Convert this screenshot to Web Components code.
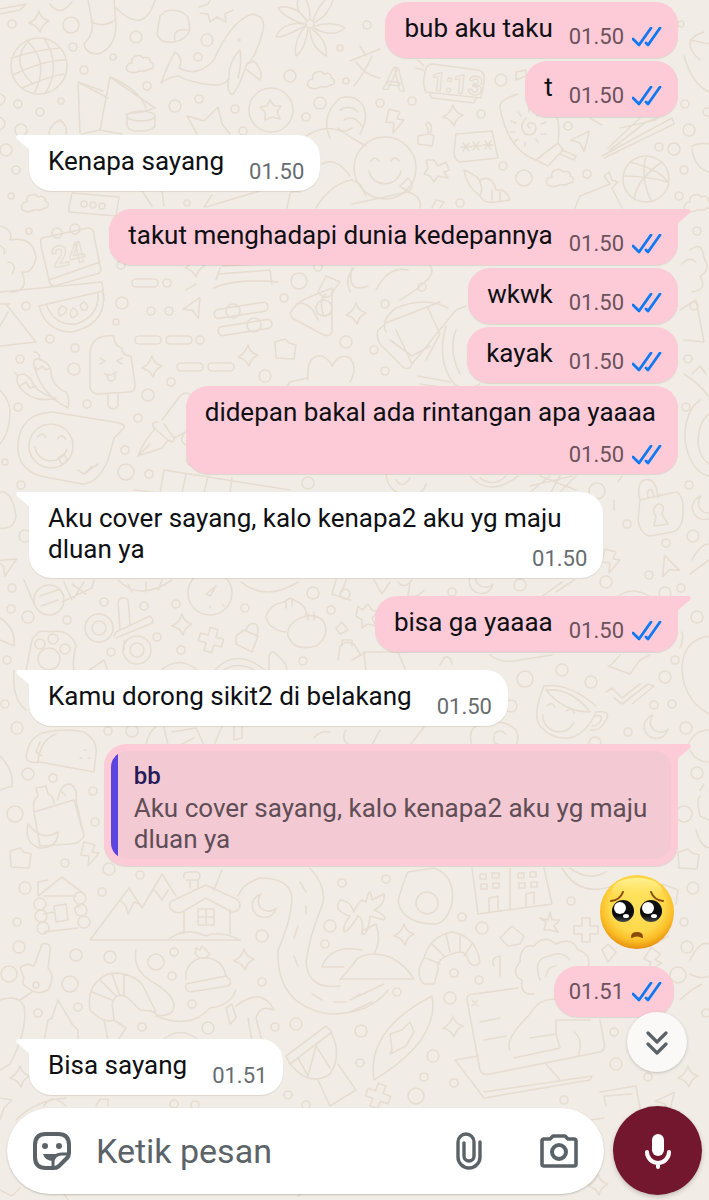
<!DOCTYPE html>
<html lang="id">
<head>
<meta charset="utf-8">
<meta name="viewport" content="width=device-width, initial-scale=1">
<title>Chat</title>
<style>
  body {
    margin: 0;
    font-family: Roboto, "Noto Sans", sans-serif;
    --bg-chat: #f1ede6;
    --bg-out: #fdcbd8;
    --bg-in: #fff;
    --doodle: #e6ddd2;
    --text: #0e1013;
    --text-meta-out: #6b525b;
    --text-meta-in: #676c70;
    --icon: #5b6368;
    --read: #0f79f2;
  }
</style>
</head>
<body>
<chat-screen>
  <chat-message side="out" time="01.50">bub aku taku</chat-message>
  <chat-message side="out" time="01.50">t</chat-message>
  <chat-message side="in" time="01.50" tail>Kenapa sayang</chat-message>
  <chat-message side="out" time="01.50" tail>takut menghadapi dunia kedepannya</chat-message>
  <chat-message side="out" time="01.50">wkwk</chat-message>
  <chat-message side="out" time="01.50">kayak</chat-message>
  <chat-message side="out" time="01.50" layout="stack">didepan bakal ada rintangan apa yaaaa</chat-message>
  <chat-message side="in" time="01.50" layout="overlay" tail>Aku cover sayang, kalo kenapa2 aku yg maju<br>dluan ya</chat-message>
  <chat-message side="out" time="01.50" tail>bisa ga yaaaa</chat-message>
  <chat-message side="in" time="01.50" tail>Kamu dorong sikit2 di belakang</chat-message>
  <chat-message side="out" layout="quote" tail>
    <chat-quote author="bb">Aku cover sayang, kalo kenapa2 aku yg maju dluan ya</chat-quote>
  </chat-message>
  <chat-emoji time="01.51"></chat-emoji>
  <chat-message side="in" time="01.51" tail>Bisa sayang</chat-message>
  <chat-composer slot="footer"></chat-composer>
</chat-screen>

<script>
class ChatWallpaper extends HTMLElement {
  constructor() {
    super();
    const shadow = this.attachShadow({ mode: 'open' });
    // x, y, radius
    const dots = [
      [12,24,4],[71,25,8],[136,37,6],[73,47,4],[113,57,3],[84,70,4],[147,86,4],[61,101,3],[175,106,6],[199,99,4],[207,40,6],[198,57,4],[290,76,6],[235,109,4],[320,103,6],[306,117,4],[340,48,3],[346,81,3],[18,104,4],[40,112,4],[21,130,6],[6,150,6],[243,131,4],[16,170,4],[11,196,3],[187,203,3],[29,231,3],[121,265,4],[167,283,4],[299,281,8],[318,267,4],
      [367,25,4],[380,103,4],[412,101,4],[481,114,4],[501,80,6],[503,166,4],[524,178,8],[568,126,4],[587,174,4],[659,147,4],[674,149,6],[689,130,6],[685,104,4],[681,24,3],[684,170,4],[679,196,4],[697,231,4],[460,203,4],[422,287,4],[707,112,4],
      [26,306,4],[122,303,6],[116,322,3],[50,339,4],[75,348,4],[74,369,6],[20,359,4],[151,311,4],[169,311,4],[200,340,4],[171,382,4],[148,395,6],[87,404,4],[18,407,4],[138,418,4],[125,450,4],[126,472,8],[149,474,4],[5,462,3],[21,485,4],[265,376,6],[346,342,6],[308,483,6],[25,536,6],[284,298,4],
      [385,304,4],[374,350,4],[385,371,4],[694,306,4],[688,359,4],[686,407,4],[689,485,4],[597,491,8],[627,524,4],[693,536,6],[666,543,4],[649,575,4],[606,582,6],
      [12,588,4],[11,609,4],[28,617,6],[104,602,4],[67,620,4],[144,606,4],[176,604,4],[157,637,4],[111,652,4],[7,660,4],[181,650,4],[245,608,4],[313,593,6],[331,610,4],[303,661,4],[5,704,4],[17,728,6],[28,774,6],[53,778,4],[93,791,4],[15,814,8],[95,822,4],[65,863,4],[109,869,6],[140,875,4],[108,731,4],[132,731,6],
      [452,592,4],[520,585,6],[681,588,4],[665,593,6],[697,617,6],[675,660,4],[562,670,6],[525,679,8],[591,682,6],[665,677,6],[511,706,6],[654,705,4],[672,704,4],[628,732,4],[686,728,6],[595,743,6],[697,773,6],[684,814,8],
      [25,888,6],[102,892,4],[17,922,4],[19,947,6],[76,955,6],[110,957,6],[156,962,8],[174,952,4],[172,976,4],[9,974,8],[70,984,8],[78,1007,4],[38,1013,4],[262,936,6],[262,982,4],[342,883,4],[330,926,6],[325,944,4],[192,1004,4],[142,1027,4],[208,1028,6],[275,1027,4],[296,1024,6],[288,1095,4],[174,1104,4],[195,1105,4],[306,1105,4],
      [386,879,4],[462,917,4],[482,928,6],[571,901,4],[693,888,6],[684,922,4],[687,947,6],[454,973,4],[479,980,4],[450,998,6],[397,992,4],[361,1031,6],[433,1056,6],[360,1063,4],[424,1077,4],[454,1083,4],[416,1096,8],[614,1032,4],[616,1064,6],[648,1077,4],[564,1100,4],[678,975,8],[706,1013,4]
    ];
    const sparkles = [[39,22],[152,367],[248,356],[195,267],[453,116],[356,314],[182,625],[404,935],[453,1027],[688,1077],[244,960],[20,1077],[598,1185]];
    const clouds = [[140,64],[321,80],[35,203],[560,178],[698,203]];
    const arrows = [[195,306,30],[583,139,40],[668,565,-20],[668,1100,40],[8,564,60]];
    const crosses = [[211,640,15],[586,930,0],[378,1096,20]];
    const use = (id, list) => list.map(([x, y, r = 0]) =>
      `<use href="#${id}" transform="translate(${x} ${y}) rotate(${r})"/>`).join('');
    shadow.innerHTML = `
      <style>
        :host {
          position: absolute;
          inset: 0;
          overflow: hidden;
          background: var(--bg-chat);
        }
        svg {
          display: block;
          width: 100%;
          height: 100%;
          fill: none;
          stroke: var(--doodle);
          stroke-width: 1.6;
          stroke-linecap: round;
          stroke-linejoin: round;
        }
        text {
          font-weight: 700;
          stroke-width: 1.2;
        }
      </style>
      <svg viewBox="0 0 709 1200" preserveAspectRatio="xMidYMin slice" aria-hidden="true">
        <defs>
          <path id="sparkle" d="M0-11Q2-3 10-1Q3 2 1 10Q-2 3-10 1Q-3-2 0-11Z"/>
          <path id="cloud" d="M-10 8C-16 7-14-1-8-1C-10-8 0-11 3-6C8-8 11-5 10-2C15-1 14 6 9 5C6 9 1 6-1 7C-4 9-7 9-10 8Z"/>
          <path id="arrow" d="M0-10L9 9L0 5L-9 9Z"/>
          <path id="cross" d="M-4-12H4V-4H12V4H4V12H-4V4H-12V-4H-4Z"/>
          <path id="shard" d="M-6-11L5-8L2-1L9 0L-2 13L-1 3L-9 2Z"/>
          <path id="moon" d="M-3-12A12 12 0 1 0 12 2A9 9 0 0 1-3-12Z"/>
          <path id="block" d="M-10-8L0-11L4-7L11-5L9 9L-9 8Z"/>
          <g id="blossom"><circle r="4"/><path d="M-3-4C-16-14-14-26-8-28C0-22 0-12 0-5M3-3C8-18 16-28 24-28C22-16 14-6 5-2M5 2C18-2 30 0 35 4C26 12 14 10 4 4M2 5C12 12 18 24 16 32C6 26 0 16 0 6M-2 5C-4 18-8 28-14 32C-16 22-12 10-5 3M-5 0C-16-2-28-10-32-16C-20-20-8-12-4-4M-5 2C-14 6-26 14-34 13C-30 2-18-2-6 0"/></g>
          <g id="smile"><path d="M-14-7Q-10-13-6-7M6-7Q10-13 14-7M-16 3C-12 20 12 20 16 3"/></g>
        </defs>
        ${dots.map(([x, y, r]) => `<circle cx="${x}" cy="${y}" r="${r}"/>`).join('')}
        ${use('sparkle', sparkles)}
        ${use('cloud', clouds)}
        ${use('arrow', arrows)}
        ${use('cross', crosses)}
        ${use('shard', [[395,120,0],[611,560,0],[653,960,20],[90,853,0]])}
        ${use('moon', [[264,906,0],[656,727,0],[704,508,0],[481,582,0]])}
        ${use('block', [[285,350,0],[20,859,0],[688,860,0]])}
        ${use('blossom', [[310,24,0]])}
        ${use('smile', [[385,168,0],[51,445,5],[559,716,15]])}

        <!-- top: pennant, stocking, globe, kites, whale -->
        <path d="M0 9L26 4L20 10L0 14M50 4Q60 18 72 2M88 0L92 22Q94 34 84 44Q86 54 98 54Q116 48 116 24L114 0M91 22Q104 28 115 20M116 8Q144 36 155 0"/>
        <path d="M160 16L166 11Q180 8 188 17L190 30Q186 40 174 42Q160 44 157 34ZM175 40Q172 28 188 30M199 7L208 4L211-2M233 10L225 14L226 22L217 17L210 22L208 14L200 13"/>
        <circle cx="39" cy="66" r="28"/>
        <path d="M12 58Q36 50 60 48M13 75Q44 60 66 60M22 88Q50 76 64 74M30 40Q8 60 33 84M44 38Q62 66 46 92M28 42Q50 62 34 94"/>
        <path d="M80 133L78 82L103 91M110 77L100 130L122 134M110 77L155 108L142 112L126 114M110 77Q138 88 146 108M78 82L108 98M100 130L82 134"/>
        <path d="M127 118V126Q130 132 142 131Q156 130 155 124V116"/><ellipse cx="141" cy="116" rx="14" ry="5"/>
        <path d="M161 83Q170 60 175 52Q184 58 179 68Q198 78 214 60Q230 22 252 14Q266 16 263 30Q256 58 247 64Q238 90 232 95Q226 90 229 78Q224 88 204 84Q184 80 179 76Q170 76 161 83ZM240 50Q228 62 229 78M240 50Q242 64 238 78M247 64L254 61Q264 72 260 80L247 70"/><circle cx="239" cy="40" r="1"/>
        <circle cx="271" cy="110" r="22"/>
        <path d="M270 100L274 106L281 106L277 112L280 119L272 117L265 120L265 112L260 107L267 106Z"/>
        <path d="M197 134L187 116L204 121L218 107L222 124L230 134M49 134Q50 124 60 120Q68 126 66 134M0 94Q10 98 0 106M0 117Q10 124 0 130"/>
        <!-- right of the top row: letters, clock, mitten, beach ball -->
        <path d="M350 61L380 49M360 46L366 56M372 56Q364 74 354 86M356 62Q366 76 380 78"/>
        <text x="383" y="89" font-size="32" transform="rotate(6 383 89)">A</text>
        <path d="M433 64L478 70Q486 72 484 82L481 98L426 92Q422 86 425 72Q426 64 433 64ZM430 94L432 98L474 103L476 98M416 68L423 70M418 60L424 66"/>
        <text x="430" y="90" font-size="26" transform="rotate(6 430 90)">1:13</text>
        <path d="M518 94Q498 100 500 108Q508 150 536 160L558 143Q562 110 546 108M536 160L548 166L563 150L558 143M560 154L574 160L576 156L562 150M516 72L526 70V76L516 80Z"/>
        <path d="M530 128Q526 126 529 123Q536 122 536 129Q534 137 525 134Q518 126 526 118M529 108V112M518 112L521 116M511 121L516 123M510 132H515M514 142L518 139M525 146V142M538 142L536 139M546 134H541M546 122L541 124M540 113L537 116"/>
        <path d="M330 138Q320 116 340 98Q354 94 362 104Q370 116 360 134M340 110Q350 104 358 112M344 120Q354 114 362 126M352 128Q344 134 338 128M306 136Q330 120 352 138L366 146"/>
        <circle cx="385" cy="168" r="31"/><path d="M400 186L408 178Q416 186 408 192Z"/>
        <path d="M456 134L492 131L498 158L460 162Q454 160 454 152ZM461 147H471M463 143L469 151M469 143L463 151M471 146H481M473 142L479 150M479 142L473 150M483 145H493M485 141L491 149M491 141L485 149"/>
        <path d="M418 136L428 134V128Q424 124 428 122Q434 126 430 134L434 136L432 146L418 144ZM426 160L434 160L438 166L446 162L449 170L444 172L448 178L438 176L434 182L430 176L424 174L428 168Z"/>
        <path d="M464 170Q466 186 480 196Q484 188 478 178Q470 172 464 170ZM480 196Q484 204 496 202L510 200Q506 188 496 190Q492 174 480 180M492 190V200M500 192V202"/>
        <path d="M608 148L640 118M610 150L646 122L658 118M604 158L674 124L672 118L602 156M590 118L602 125M620 128L656 120"/>
        <circle cx="646" cy="179" r="23"/><path d="M630 162Q660 170 668 182M646 156Q640 180 652 202M624 176Q646 176 668 182M634 200Q636 180 662 162"/>
        <path d="M692 146Q700 142 709 144M692 148Q694 168 709 172M700 60Q678 40 704 32M684 56Q692 84 709 92M690 40L709 44"/>
        <path d="M575 208L580 196L610 184L604 176L609 172L612 180L618 182L612 188L622 208M352 204L408 192Q422 196 420 208M366 196L360 184L352 180M432 208L436 200L444 202L440 208"/>
        <!-- cluster beside the first incoming bubbles -->
        <path d="M69 208L72 193L119 197L116 216L69 212ZM142 191L152 206M162 191L164 206M204 207L212 195M206 207L260 191M287 208L290 194Q292 190 300 192M316 208Q330 184 352 180M322 164Q336 156 350 176"/>
        <circle cx="84" cy="204" r="3"/><circle cx="93" cy="205" r="3"/><circle cx="102" cy="206" r="3"/>
        <path d="M0 226Q14 230 10 240Q34 236 36 258Q32 274 22 272Q30 292 10 292M0 246Q6 248 4 254M8 262Q18 264 12 274"/>
        <path d="M42 238L88 228Q94 228 94 236L101 270Q100 274 96 274L54 286Q50 286 49 280L41 246Q40 240 42 238ZM49 280L100 262"/>
        <circle cx="57" cy="233" r="5"/><circle cx="75" cy="229" r="5"/>
        <text x="54" y="268" font-size="29" transform="rotate(-12 54 268)">24</text>
        <rect x="132" y="279" width="26" height="8" rx="4"/>
        <path d="M0 292L102 282L104 300M216 280L220 268M222 266L262 264M218 274L270 270L272 284M214 288Q236 278 278 282M318 292L326 276L340 282L334 290Q330 300 322 296ZM350 292Q344 278 354 268M400 300Q440 276 430 266M376 290Q388 266 408 270M352 268Q346 294 368 286"/>
        <path d="M690 250Q702 240 704 258Q712 270 700 276Q708 290 692 292M682 264Q690 256 696 262"/>
        <!-- watermelon, sliders, pizza, lolly, chillies -->
        <path d="M39 306L103 291Q108 324 72 332Q46 332 39 306ZM46 304Q54 326 76 324Q100 316 98 292M60 316Q56 310 62 306Q70 308 64 314ZM72 318Q68 312 73 308Q80 312 76 316ZM82 310Q78 304 84 302Q90 306 86 310ZM0 346L36 342L6 304M0 304H10M8 312L0 326"/>
        <rect x="214" y="306" width="54" height="9" rx="4" transform="rotate(-9 240 310)"/><circle cx="233" cy="311" r="7"/>
        <rect x="218" y="323" width="54" height="9" rx="4" transform="rotate(-9 245 327)"/><circle cx="254" cy="325" r="7"/>
        <path d="M290 313Q296 302 312 296L332 288V332Q330 338 322 334L292 318ZM296 304Q310 300 318 320M326 294Q318 300 324 316L332 314"/><circle cx="324" cy="308" r="8"/>
        <rect x="135" y="336" width="26" height="8" rx="4"/><rect x="166" y="336" width="26" height="8" rx="4"/>
        <rect x="177" y="363" width="26" height="8" rx="4"/><rect x="208" y="363" width="26" height="8" rx="4"/>
        <path d="M114 336Q92 334 90 352L90 388Q92 394 98 394L128 392Q136 392 135 384L131 356Q122 356 122 348Q114 346 114 336ZM108 394V406Q113 412 118 406V394M100 358L105 361L100 364M122 358L117 361L122 364M104 373Q110 378 116 372M107 375Q108 382 112 381Q116 380 115 374"/>
        <path d="M34 366Q32 356 42 360Q50 364 51 372Q52 386 66 392Q70 398 68 408Q44 396 36 372ZM34 366L38 370L42 366L46 370L50 368M40 360Q40 352 34 352M18 384Q14 374 24 374Q32 378 34 386Q44 396 56 398Q34 404 20 388ZM18 376L14 372M20 386L26 382L30 388L36 386"/>
        <path d="M286 388L290 382L308 378M308 380Q306 354 322 356Q330 360 332 366Q340 352 350 358Q358 368 350 382M0 390Q10 400 10 412Q10 432 0 444"/>
        <!-- speech bubble with face, fountain pen -->
        <path d="M52 412L114 422Q126 424 124 428L114 438L108 460Q98 484 82 484L40 476Q16 468 18 444Q20 414 52 412ZM78 470L84 474L92 466M84 474L98 464"/>
        <circle cx="51" cy="446" r="22"/><path d="M58 458L64 454Q70 462 62 464Z"/>
        <path d="M158 422Q150 422 154 428L168 440Q174 444 174 438L164 424M162 420L180 396Q186 390 192 396M174 438L190 430M156 428Q144 440 138 456L162 448L168 440M138 456L150 444M184 434Q178 442 188 446M190 456Q182 462 192 466"/>
        <path d="M160 493L164 470L290 490M208 476L204 493M186 474L182 493M232 478L230 493M134 490L160 493M0 492Q12 490 16 516Q14 530 0 528M186 290L196 284"/>
        <!-- drum, cap and tyre on the right -->
        <path d="M388 322L378 330Q376 336 380 344L404 368Q410 370 412 364L456 310L466 306M388 322L404 316L440 302M396 330L412 364M428 308L440 334L426 360M390 340L412 356L430 346M386 332Q380 320 396 308Q426 296 448 308M418 376L450 382M420 384L448 388M446 326Q436 360 454 384Q466 392 480 384M456 330Q448 350 460 374"/>
        <path d="M680 310L696 300L704 342L684 340M684 374Q700 384 708 396M700 400Q684 412 685 440Q690 472 709 476M709 414Q698 422 698 444Q700 458 709 464M692 374L700 366L706 374"/>
        <path d="M386 474Q388 492 404 494Q422 498 426 484M396 480Q402 490 410 478M470 476Q490 498 518 476M480 478Q494 488 506 476M550 476L528 494M540 476L576 490M560 476L550 494M576 476L558 494M530 486L572 476"/>
        <path d="M640 500Q636 484 644 480Q656 476 658 498M648 498Q646 488 652 490L654 496"/>
        <path d="M640 500L676 492Q684 494 683 514Q682 530 672 532L650 536Q640 534 638 520ZM658 504Q652 508 654 514L656 516L654 526L668 524L662 514Q666 504 658 504"/>
        <path d="M660 496V494M690 574L709 560M692 560Q700 544 709 544M614 500V510M618 482L622 476"/>
        <!-- takeaway row -->
        <path d="M24 580L34 604M62 602L92 588L94 580M64 582L72 600M72 584L86 594M84 582L74 598"/>
        <circle cx="49" cy="600" r="15"/><path d="M40 596L58 590M41 606L58 600"/>
        <path d="M118 580Q140 602 172 580M128 584L132 592M146 582V592M162 580L158 590M241 582Q266 602 298 582M336 580L332 594L350 600M346 580L342 592"/>
        <circle cx="210" cy="593" r="22"/><path d="M206 594L216 586L210 596ZM210 606V608M222 604L224 606"/><circle cx="345" cy="594" r="5"/>
        <circle cx="99" cy="628" r="14"/><circle cx="99" cy="628" r="7"/><circle cx="137" cy="650" r="14"/><circle cx="137" cy="650" r="7"/>
        <path d="M114 636L116 632L150 616Q156 622 150 624L116 638M120 630L118 602Q122 594 128 600L130 624M124 640V650"/>
        <path d="M26 671L32 640Q38 628 50 632Q70 628 76 646Q72 660 74 671M14 671Q12 700 26 710M88 671L104 660L108 671M160 671Q180 654 198 671M214 671Q236 646 266 671M222 671Q238 660 256 671"/>
        <circle cx="40" cy="644" r="5"/><circle cx="53" cy="639" r="5"/><circle cx="65" cy="649" r="5"/><circle cx="49" cy="659" r="11"/>
        <path d="M236 636L244 630L258 636L252 652L236 644ZM246 630Q248 622 256 624Q260 630 256 636M269 671V660Q268 652 274 652L282 660Q288 666 286 671"/>
        <path d="M266 616Q270 604 284 602L290 598L298 602Q308 608 306 616M266 616Q268 630 286 632M306 616Q286 622 288 636Q294 652 316 646Q330 636 324 622Q318 614 306 616ZM286 602V608M292 600V606M308 614V620M314 612V620"/>
        <path d="M336 628L342 622L348 630L340 634ZM338 660L340 646Q346 640 354 644L360 654M342 646V640H352V646"/>
        <path d="M0 618Q16 628 14 646L0 640"/>
        <!-- around the second half of the thread -->
        <path d="M358 606L362 610L368 604L372 610L378 612L372 618L376 626L368 624L362 628L362 620L356 616ZM398 582Q404 590 412 580M410 582L408 596Q418 598 424 590M374 580L382 594L390 582M540 598L562 582M556 592L574 580M616 598Q632 584 652 598"/>
        <path d="M366 671L364 652H398L406 671M352 660L366 652M440 665L444 658Q450 654 452 664M490 655Q500 664 520 660L552 655M608 666L630 674L640 660M620 655L610 666M640 660L650 655M680 648Q684 640 682 632M709 636Q682 640 682 670Q684 700 709 714"/>
        <path d="M606 692L612 688L622 698L640 684M614 698L622 704L648 684L654 686L632 704"/>
        <path d="M544 686Q532 714 540 726Q552 740 570 738Q588 732 596 712M544 686Q568 682 596 706M546 690Q572 688 590 712Q564 712 546 690ZM596 712Q612 710 606 720Q600 732 590 730M596 716Q604 714 600 722Q596 726 592 726"/>
        <path d="M472 745Q466 726 484 724Q504 718 516 730Q520 738 516 745M494 734Q500 728 506 734M494 736Q492 744 500 745"/>
        <path d="M146 745Q148 732 156 727M164 727L168 745M172 732L196 728L204 745M180 745L194 738M214 745L222 727M234 727V740L242 738V727M314 738Q320 730 330 732M350 745Q340 740 346 730M410 745L424 727M372 745L380 730"/>
        <path d="M26 758Q28 736 46 732Q66 728 84 732Q98 740 96 754L94 772L40 762Q28 764 26 758ZM38 762Q40 740 56 734M40 742L36 752L42 756M84 750H86M80 758H82M88 758H90M0 756Q14 770 12 786L0 790"/>
        <path d="M34 812L74 800L84 836Q80 844 70 844L40 846ZM34 812Q32 800 38 796L36 788L46 786L48 794Q54 796 54 804M58 800Q60 784 70 784Q78 788 76 800L84 836M60 790L66 796M28 824Q24 844 40 848Q58 848 58 832Q42 842 28 824Z"/>
        <path d="M688 745Q694 730 709 730M690 750Q696 762 709 762M700 790L704 784M700 796Q696 800 700 816L709 820M696 830Q700 846 709 848"/>
        <!-- cabins, mountains, road, palm -->
        <path d="M38 896L62 877L84 894M38 894V882L48 880M44 896L76 896M44 914L54 912M74 908L80 906M44 932L78 928"/>
        <circle cx="40" cy="904" r="6"/><circle cx="41" cy="916" r="6"/><circle cx="43" cy="928" r="6"/><circle cx="80" cy="898" r="6"/><circle cx="81" cy="910" r="6"/><circle cx="84" cy="922" r="6"/>
        <path d="M54 906L66 904L68 920L56 922Z"/>
        <path d="M90 940H240M90 940L129 888L142 908L162 874L176 896M120 900L126 906L128 914L134 902L140 904M154 890L158 894L162 900L168 890"/>
        <path d="M170 908Q168 902 174 900L206 885L238 900Q242 906 238 910Q232 914 228 910L206 898L182 912Q174 914 170 908ZM184 912V934M230 910V934M190 888V880M184 878Q182 872 190 872H198Q202 876 198 880H186M198 888V880M168 940Q184 926 206 936Q220 930 240 940M198 909H214V925H198ZM206 909V925M198 917H214"/>
        <path d="M214 890L222 870M238 896Q242 884 260 878Q292 878 292 900Q290 924 278 950Q276 1006 330 1014Q370 1014 388 990M310 868Q328 888 322 906Q310 934 306 962Q308 990 340 986M300 882L306 892M306 906V914M298 926L294 938M294 956L298 966M312 994L322 1000M334 1002H346M354 998L360 994"/>
        <path d="M322 967Q330 944 362 950M322 967H344M340 980L358 958Q372 950 392 958Q406 966 414 979H340M374 954Q382 940 376 924L364 930M340 900Q350 900 354 912Q360 896 366 902Q370 884 372 900L384 894Q386 904 374 910Q388 916 384 920L370 916Q368 936 362 934Q364 918 358 916Q350 930 344 932Q342 926 350 916Q336 912 338 904ZM350 1000L384 984M350 1012L372 1002"/>
        <path d="M398 902Q402 884 408 872L434 868Q456 876 452 904Q446 924 434 924Q404 924 398 902Z"/><circle cx="427" cy="903" r="11"/>
        <path d="M472 868L478 914L552 904L544 868M510 868V910M489 912V898L498 896V910M526 906V894L534 892V904M480 874H486V879H480ZM492 873H499V878H492ZM481 884H487V889H481ZM493 883H499V888H493ZM518 873H524V878H518ZM530 872H536V877H530ZM519 883H525V888H519ZM531 882H537V887H531Z"/>
        <path d="M562 868Q580 900 618 884M570 868Q588 882 606 872M662 884L678 890L676 904M640 940Q650 950 668 936M550 912L552 920L560 920L554 926L558 932L550 930L544 930L546 922L540 918L548 920Z"/>
        <path d="M500 938L512 926L524 936L520 944L508 946ZM602 950L608 944L616 952L608 962Z"/>
        <path d="M424 984Q414 974 424 958Q430 936 452 932Q476 936 480 962Q474 970 468 960Q466 948 452 954Q436 958 438 970L434 984ZM426 958L440 964M432 944L444 956M446 934L450 952M460 934V952M472 944L464 956M494 966Q490 958 500 956V976"/>
        <path d="M534 994Q520 996 522 980Q510 974 520 962Q520 944 534 946Q544 934 556 944Q572 936 578 950Q592 954 588 968M540 980Q532 958 550 956Q562 950 570 960M546 976Q548 966 556 966M560 978V980"/>
        <path d="M24 978L20 968Q26 962 34 966L42 944Q52 942 50 952L48 968Q56 976 48 990Q38 996 28 988Q20 984 24 978ZM32 992L20 1000"/><circle cx="36" cy="985" r="3"/>
        <path d="M90 1010Q86 984 108 974Q128 970 142 984L156 1012L140 1010L128 998Q116 990 112 1004L114 1020Q104 1024 90 1010ZM92 992L112 1000M100 980L116 996M112 974L120 996M124 974L124 996M104 1020L108 1040M114 1020L126 1028L118 1040M136 950Q132 972 156 984Q180 1000 172 1012Q160 1020 150 1010M156 1016Q190 1030 210 1008M210 1008Q230 1006 236 990"/>
        <path d="M186 980Q184 964 200 958Q222 956 226 976L230 980Q232 984 228 986L190 992Q184 990 186 984L226 976M196 948L200 950L202 946L206 950L210 954L206 958L200 958L195 954Z"/>
        <path d="M0 1000Q18 994 24 1006Q28 1030 10 1064L0 1070M44 1041L48 1020L52 1018L58 1000L72 1024L78 1030V1041M226 1008L232 1004L236 1018L230 1024ZM236 1006Q262 986 274 1010Q260 1004 256 1018L262 1041M248 1018L252 1041M162 1041Q180 1024 200 1041"/>
        <path d="M286 1056L326 1026L332 1032L290 1064ZM290 1064Q310 1088 330 1074Q342 1056 332 1034M298 1058L308 1076L316 1046L330 1068M318 1080L330 1106M330 1106L356 1090L338 1064"/>
        <path d="M374 1080Q366 1030 432 996Q440 1040 374 1080ZM392 1050L390 1034L402 1030L410 1022L414 1032L406 1046L390 1054Z"/>
        <path d="M467 1000Q466 994 474 994L518 988M467 1000L480 1070Q482 1076 490 1074L600 1052Q606 1050 604 1042L600 1020M480 1022L500 1018M484 1040L506 1036M455 1060L484 1098L590 1080L592 1076L484 1092M455 1060L478 1056M546 1064L560 1080M472 1000L478 1006M478 1000L472 1006M510 1050Q504 1040 530 1014Q540 996 560 1000M530 1038L556 1034V1020H590M514 1058L560 1048L556 1034M574 1032Q584 1040 578 1056"/>
        <path d="M600 1092L636 1086L640 1108M606 1106L604 1096L632 1094M690 960Q700 940 709 944M680 1000Q690 990 702 984M690 974Q700 980 709 976"/>
        <!-- under the composer -->
        <path d="M0 1098L12 1100L4 1108L0 1120M16 1120Q36 1100 66 1098M44 1106Q52 1092 66 1106M96 1106L100 1099H108V1106M0 1190L12 1196L20 1188M64 1194L68 1200M298 1196L306 1190M590 1120L604 1118"/>
      </svg>
    `;
  }
}

class ChatMeta extends HTMLElement {
  constructor() {
    super();
    this.attachShadow({ mode: 'open' });
  }

  connectedCallback() {
    const ticks = `
      <svg viewBox="0 0 30 20" role="img" aria-label="Dibaca">
        <path d="M1 12L7 18L19 1M14 16L16 18L28 1"/>
      </svg>`;
    this.shadowRoot.innerHTML = `
      <style>
        :host {
          display: flex;
          align-items: center;
          gap: 8px;
          font-size: 22px;
          line-height: 26px;
          white-space: nowrap;
          color: var(--text-meta-in);
        }
        :host([read]) {
          color: var(--text-meta-out);
        }
        svg {
          width: 30px;
          height: 20px;
          fill: none;
          stroke: var(--read);
          stroke-width: 2.8;
          stroke-linecap: round;
          stroke-linejoin: round;
        }
      </style>
      <time>${this.getAttribute('time')}</time>${this.hasAttribute('read') ? ticks : ''}
    `;
  }
}

class ChatMessage extends HTMLElement {
  constructor() {
    super();
    this.attachShadow({ mode: 'open' });
  }

  connectedCallback() {
    const out = this.getAttribute('side') === 'out';
    const time = this.getAttribute('time');
    const tail = out
      ? '<path d="M0 0H12Q15 1 13 4L0 15Z"/>'
      : '<path d="M14 0H2Q-1 1 1 4L14 15Z"/>';
    this.shadowRoot.innerHTML = `
      <style>
        :host {
          display: flex;
          margin-top: 3px;
          padding: 0 31px 0 29px;
          --bubble: var(--bg-in);
        }
        :host([tail]) {
          margin-top: 18px;
        }
        :host([side=out]) {
          justify-content: flex-end;
          --bubble: var(--bg-out);
        }
        .bubble {
          position: relative;
          display: flex;
          gap: 25px;
          box-sizing: border-box;
          max-width: 81vw;
          padding: 11px 16px 6px 19px;
          border-radius: 22px;
          background: var(--bubble);
          color: var(--text);
          font-size: 26px;
          line-height: 31px;
          box-shadow: 0 1px 1px rgba(90, 70, 60, .14);
        }
        .text {
          padding-bottom: 8px;
        }
        chat-meta {
          align-self: flex-end;
        }
        :host([side=out]) .bubble {
          gap: 16px;
          padding-bottom: 8px;
        }
        :host([side=out]) .text {
          padding-bottom: 6px;
        }
        :host([tail][side=in]) .bubble {
          border-top-left-radius: 0;
        }
        :host([tail][side=out]) .bubble {
          border-top-right-radius: 0;
        }
        :host([layout=stack]) .bubble {
          flex-direction: column;
          gap: 8px;
          padding-bottom: 6px;
        }
        :host([layout=stack]) .text {
          padding-right: 6px;
        }
        :host([layout=overlay]) .bubble {
          display: grid;
          width: 100%;
        }
        :host([layout=overlay]) .text,
        :host([layout=overlay]) chat-meta {
          grid-area: 1 / 1;
        }
        :host([layout=overlay]) .text {
          padding-bottom: 7px;
        }
        :host([layout=overlay]) chat-meta {
          justify-self: end;
        }
        :host([layout=quote]) .bubble {
          padding: 7px;
        }
        :host([layout=quote]) .text {
          padding: 0;
        }
        .tail {
          position: absolute;
          top: 0;
          width: 14px;
          height: 15px;
          fill: var(--bubble);
        }
        :host([side=in]) .tail {
          right: 100%;
          margin-right: -1px;
        }
        :host([side=out]) .tail {
          left: 100%;
          margin-left: -1px;
        }
      </style>
      <div class="bubble">
        ${this.hasAttribute('tail') ? `<svg class="tail" viewBox="0 0 14 15" aria-hidden="true">${tail}</svg>` : ''}
        <div class="text"><slot></slot></div>
        ${time ? `<chat-meta time="${time}"${out ? ' read' : ''}></chat-meta>` : ''}
      </div>
    `;
  }
}

class ChatQuote extends HTMLElement {
  constructor() {
    super();
    this.attachShadow({ mode: 'open' });
  }

  connectedCallback() {
    this.shadowRoot.innerHTML = `
      <style>
        :host {
          display: block;
          padding: 8px 16px 4px 23px;
          border-radius: 16px;
          background: linear-gradient(to right, #5b45de 7px, #f3c9d3 7px);
          color: #5f4e56;
        }
        .author {
          color: #261a58;
          font-size: 24px;
          font-weight: 500;
          line-height: 34px;
        }
      </style>
      <div class="author">${this.getAttribute('author')}</div>
      <slot></slot>
    `;
  }
}

class ChatEmoji extends HTMLElement {
  constructor() {
    super();
    this.attachShadow({ mode: 'open' });
  }

  connectedCallback() {
    this.shadowRoot.innerHTML = `
      <style>
        :host {
          display: flex;
          flex-direction: column;
          align-items: flex-end;
          gap: 17px;
          margin-top: 9px;
          padding: 0 35px 4px 0;
        }
        .face {
          width: 74px;
          height: 74px;
        }
        .pill {
          padding: 13px 12px 12px 15px;
          border-radius: 24px;
          background: var(--bg-out);
          box-shadow: 0 1px 1px rgba(90, 70, 60, .14);
        }
      </style>
      <svg class="face" viewBox="0 0 74 74" role="img" aria-label="Wajah memohon">
        <defs>
          <radialGradient id="skin" cx=".5" cy=".4" r=".62">
            <stop offset="0" stop-color="#ffe15a"/>
            <stop offset=".6" stop-color="#fed84a"/>
            <stop offset=".8" stop-color="#fabd26"/>
            <stop offset="1" stop-color="#e4860a"/>
          </radialGradient>
          <linearGradient id="shine" x2="0" y2="1">
            <stop offset="0" stop-color="#fff6a0" stop-opacity=".9"/>
            <stop offset="1" stop-color="#ffe45e" stop-opacity="0"/>
          </linearGradient>
          <linearGradient id="iris" x2="0" y2="1">
            <stop offset="0" stop-color="#111"/>
            <stop offset=".7" stop-color="#0b0b0d"/>
            <stop offset="1" stop-color="#45484d"/>
          </linearGradient>
        </defs>
        <circle cx="37" cy="37" r="37" fill="url(#skin)"/>
        <ellipse cx="37" cy="15" rx="25" ry="12" fill="url(#shine)"/>
        <g fill="none" stroke="#8a4a0c" stroke-width="2" stroke-linecap="round">
          <path d="M11 26Q20 25 23 17"/>
          <path d="M63 26Q54 25 51 17"/>
        </g>
        <circle cx="23" cy="36" r="11" fill="url(#iris)"/>
        <circle cx="51" cy="36" r="11" fill="url(#iris)"/>
        <circle cx="20" cy="33" r="6" fill="#fff"/>
        <circle cx="48" cy="33" r="6" fill="#fff"/>
        <ellipse cx="26" cy="41" rx="3" ry="2" fill="#fff"/>
        <ellipse cx="54" cy="41" rx="3" ry="2" fill="#fff"/>
        <path d="M31 62Q31 57 37 57Q43 57 43 62Q43 64 40 62Q37 61 34 62Q31 64 31 62Z" fill="#8a4a0c"/>
      </svg>
      <div class="pill"><chat-meta time="${this.getAttribute('time')}" read></chat-meta></div>
    `;
  }
}

class ChatComposer extends HTMLElement {
  constructor() {
    super();
    const shadow = this.attachShadow({ mode: 'open' });
    shadow.innerHTML = `
      <style>
        :host {
          position: relative;
          display: flex;
          align-items: center;
          gap: 9px;
          padding: 0 7px 5px;
        }
        button {
          flex: none;
          display: grid;
          place-items: center;
          margin: 0;
          padding: 0;
          border: 0;
          background: none;
          color: var(--icon);
        }
        svg {
          display: block;
          fill: none;
          stroke: currentColor;
          stroke-linecap: round;
          stroke-linejoin: round;
        }
        .field {
          flex: 1;
          min-width: 0;
          display: flex;
          align-items: center;
          box-sizing: border-box;
          height: 86px;
          padding: 0 26px;
          border-radius: 43px;
          background: #fff;
          box-shadow: 0 1px 2px rgba(60, 50, 40, .25);
        }
        .field button, .field svg {
          width: 38px;
          height: 38px;
          stroke-width: 4;
        }
        input {
          flex: 1;
          min-width: 0;
          margin: 0 25px;
          padding: 0;
          border: 0;
          outline: 0;
          background: none;
          color: var(--text);
          font: inherit;
          font-size: 34px;
          line-height: 40px;
        }
        input::placeholder {
          color: var(--icon);
          opacity: 1;
        }
        .attach {
          margin-right: 52px;
        }
        .mic {
          width: 89px;
          height: 89px;
          border-radius: 50%;
          background: #73172e;
          color: #fff;
          box-shadow: 0 2px 4px rgba(60, 50, 40, .25);
        }
        .jump {
          position: absolute;
          right: 22px;
          bottom: 100%;
          margin-bottom: 34px;
          width: 60px;
          height: 60px;
          border-radius: 50%;
          background: #faf9f8;
          box-shadow: 0 1px 3px rgba(60, 50, 40, .25);
        }
      </style>
      <div class="field">
        <button type="button" aria-label="Stiker">
          <svg viewBox="0 0 38 38">
            <path d="M13 2H25Q36 2 36 13V21Q36 24 34 26L26 34Q24 36 21 36H13Q2 36 2 25V13Q2 2 13 2Z"/>
            <path d="M20 36V31Q20 22 29 22H35" stroke-width="3"/>
            <circle cx="12" cy="14" r="3" fill="currentColor" stroke="none"/>
            <circle cx="26" cy="14" r="3" fill="currentColor" stroke="none"/>
            <path d="M10 22H26Q21 24 20 29Q12 29 10 22Z" fill="currentColor" stroke="none"/>
          </svg>
        </button>
        <input type="text" aria-label="Ketik pesan" placeholder="Ketik pesan">
        <button type="button" class="attach" aria-label="Lampirkan">
          <svg viewBox="0 0 38 38">
            <path d="M30 10V25A11 11 0 0 1 8 25V10A8 8 0 0 1 24 10V24A5 5 0 0 1 14 24V11" stroke-width="3.4"/>
          </svg>
        </button>
        <button type="button" aria-label="Kamera">
          <svg viewBox="0 0 38 38">
            <path d="M4 7H10L13 4H25L28 7H34Q36 7 36 9V32Q36 34 34 34H4Q2 34 2 32V9Q2 7 4 7Z" stroke-width="3.6"/>
            <circle cx="19" cy="20" r="7"/>
          </svg>
        </button>
      </div>
      <button type="button" class="mic" aria-label="Pesan suara">
        <svg width="28" height="38" viewBox="0 0 28 38">
          <rect x="8" y="2" width="12" height="22" rx="6" fill="currentColor" stroke="none"/>
          <path d="M3 20A11 11 0 0 0 25 20M14 31V35" stroke-width="4"/>
        </svg>
      </button>
      <button type="button" class="jump" aria-label="Ke pesan terbaru">
        <svg width="24" height="26" viewBox="0 0 24 26" stroke-width="3.2">
          <path d="M3 4L12 13L21 4M3 15L12 24L21 15"/>
        </svg>
      </button>
    `;
  }
}

class ChatScreen extends HTMLElement {
  constructor() {
    super();
    const shadow = this.attachShadow({ mode: 'open' });
    shadow.innerHTML = `
      <style>
        :host {
          position: relative;
          display: flex;
          flex-direction: column;
          min-height: 100vh;
          overflow: hidden;
        }
        main {
          position: relative;
          flex: 1;
          margin-top: -1px;
          padding-bottom: 8px;
        }
      </style>
      <chat-wallpaper></chat-wallpaper>
      <main><slot></slot></main>
      <slot name="footer"></slot>
    `;
  }
}

customElements.define('chat-wallpaper', ChatWallpaper);
customElements.define('chat-meta', ChatMeta);
customElements.define('chat-message', ChatMessage);
customElements.define('chat-quote', ChatQuote);
customElements.define('chat-emoji', ChatEmoji);
customElements.define('chat-composer', ChatComposer);
customElements.define('chat-screen', ChatScreen);
</script>
</body>
</html>
